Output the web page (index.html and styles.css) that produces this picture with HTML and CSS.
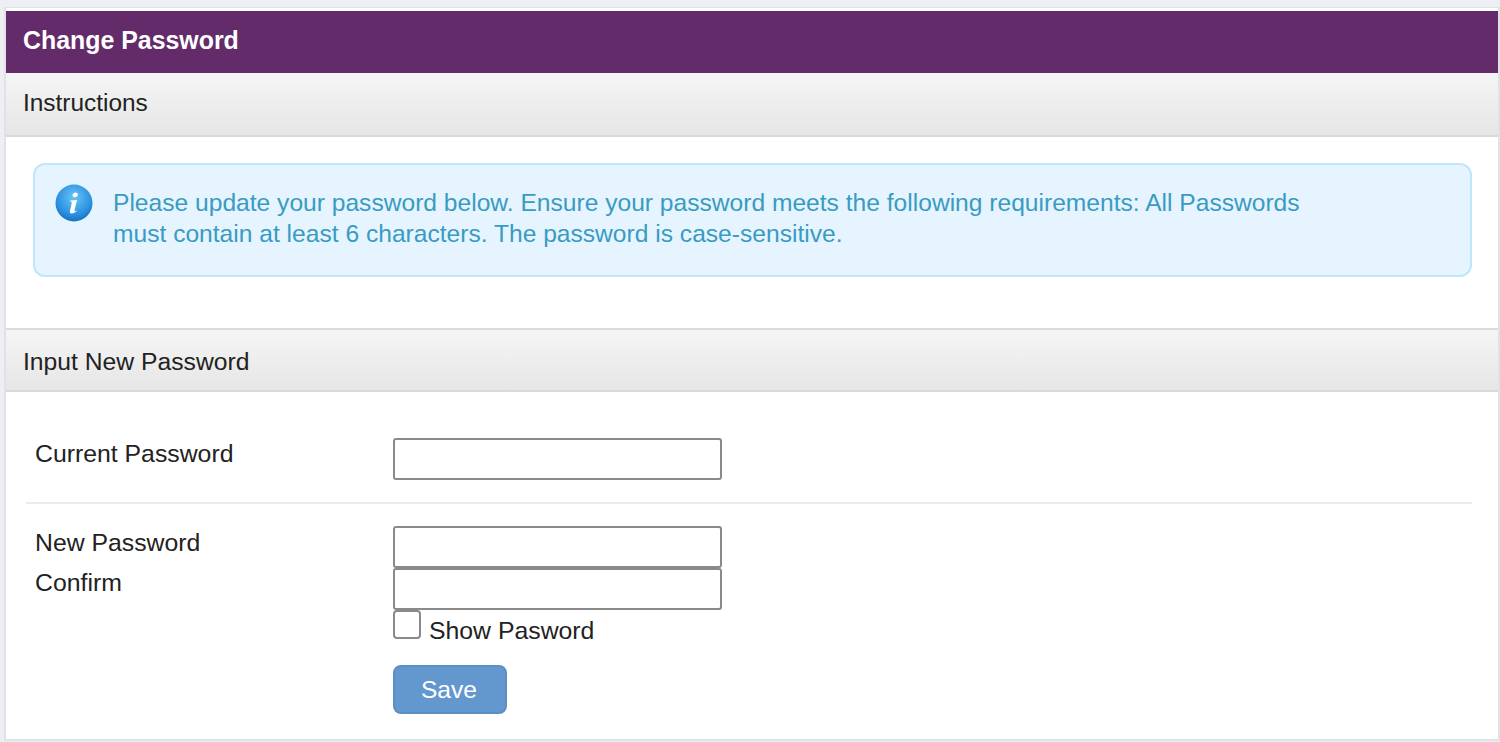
FILE: index.html
```html
<!DOCTYPE html>
<html lang="en">

<head>
    <meta charset="UTF-8">
    <title>Change Password</title>
    <link rel="stylesheet" href="styles.css">
</head>

<body>
    <div class="panel">
        <div class="panel-title">Change Password</div>
        <div class="section-head">Instructions</div>
        <div class="instructions">
            <div class="alert">
                <svg class="alert-icon" viewBox="0 0 38 38" width="38" height="38">
                    <defs>
                        <radialGradient id="ball" cx="50%" cy="35%" r="65%">
                            <stop offset="0" stop-color="#6cc4f5" />
                            <stop offset="0.7" stop-color="#2b93e2" />
                            <stop offset="1" stop-color="#1a6fc0" />
                        </radialGradient>
                    </defs>
                    <circle cx="19" cy="19" r="18.5" fill="url(#ball)" />
                    <path d="M20.5 8.500c1.600 0 2.600 1 2.300 2.400-.3 1.300-1.600 2.300-3 2.300-1.500 0-2.500-1-2.200-2.400.3-1.300 1.500-2.300 2.900-2.300z" fill="#fff" />
                    <path d="M15.500 16.500l6.500-.6-2.600 11c-.1.700.5.800 1.900-.5l.6.700c-1.700 1.700-3.300 2.400-5 2.400-1.600 0-2.400-.9-2-2.500l1.900-8.300c.1-.6-.2-.9-1.400-.9z" fill="#fff" />
                </svg>
                <p class="alert-text">Please update your password below. Ensure your password meets the following requirements: All Passwords must contain at least 6 characters. The password is case-sensitive.</p>
            </div>
        </div>
        <div class="section-head section-head-second">Input New Password</div>
        <form class="pw-form">
            <div class="form-row row-current">
                <label class="field-label">Current Password</label>
                <input type="password" class="field-input">
            </div>
            <div class="form-row row-new">
                <div class="label-stack">
                    <label class="field-label">New Password</label>
                    <label class="field-label">Confirm</label>
                </div>
                <div class="input-stack">
                    <input type="password" class="field-input">
                    <input type="password" class="field-input">
                    <label class="show-row">
                        <span class="check-box"></span>
                        <span class="show-text">Show Pasword</span>
                    </label>
                    <button type="button" class="save-btn">Save</button>
                </div>
            </div>
        </form>
    </div>
</body>

</html>
```

FILE: styles.css
```css
* {
    box-sizing: border-box;
}

html,
body {
    height: 100%;
}

body {
    margin: 0;
    padding: 7px 0 0 4px;
    background-color: #edeff4;
    font-family: "Liberation Sans", Arial, sans-serif;
    font-size: 24.6px;
    color: #222;
    overflow: hidden;
}

.panel {
    height: 734px;
    padding-top: 3px;
    border: 2px solid #dfe2e6;
    border-top-width: 1px;
    background-color: #fff;
}

.panel-title {
    height: 62px;
    padding-left: 17px;
    line-height: 58px;
    font-size: 24.9px;
    font-weight: bold;
    color: #fff;
    background-color: #642b6b;
}

.section-head {
    height: 64px;
    padding-left: 17px;
    line-height: 60px;
    font-size: 24.4px;
    border-bottom: 2px solid #d9d9d9;
    background: linear-gradient(#f5f5f5, #e6e6e6);
}

.section-head-second {
    border-top: 2px solid #dcdcdc;
    line-height: 64px;
    font-size: 24.7px;
}

.instructions {
    height: 191px;
    padding: 26px 26px 0 27px;
}

.alert {
    display: flex;
    height: 114px;
    padding: 22px 20px 0 20px;
    border: 2px solid #bfe6fa;
    border-radius: 12px;
    background-color: #e5f4fe;
}

.alert-icon {
    flex: none;
    width: 38px;
    height: 38px;
    margin: -3px 20px 0 0;
}

.alert-text {
    width: 1200px;
    margin: 0;
    line-height: 31px;
    color: #3a9bc2;
}

.pw-form {
    padding: 0 26px 0 20px;
    font-size: 24.8px;
}

.form-row {
    display: flex;
}

.row-current {
    height: 112px;
    padding: 46px 0 0 9px;
    border-bottom: 2px solid #ebebeb;
}

.row-current .field-label {
    line-height: 32px;
}

.row-new {
    padding: 22px 0 0 9px;
}

.field-label {
    display: block;
    width: 358px;
    line-height: 40px;
}

.label-stack {
    margin-top: -3px;
}

.field-input {
    display: block;
    width: 329px;
    height: 42px;
    margin: 0;
    padding: 0 6px;
    border: 2px solid #8a8a8a;
    border-radius: 3px;
    background-color: #fff;
}

.input-stack {
    display: flex;
    flex-direction: column;
    align-items: flex-start;
}

.show-row {
    display: flex;
    align-items: flex-start;
}

.check-box {
    width: 28px;
    height: 29px;
    border: 2px solid #8a8a8a;
    border-radius: 4px;
    background-color: #fff;
}

.show-text {
    margin: 6px 0 0 8px;
    line-height: 29px;
}

.save-btn {
    width: 114px;
    height: 49px;
    margin-top: 20px;
    padding: 0 2px 0 0;
    border: 2px solid #5a8fc4;
    border-radius: 8px;
    font-family: inherit;
    font-size: 24.6px;
    color: #fff;
    background-color: #6398ce;
    cursor: pointer;
}
```
